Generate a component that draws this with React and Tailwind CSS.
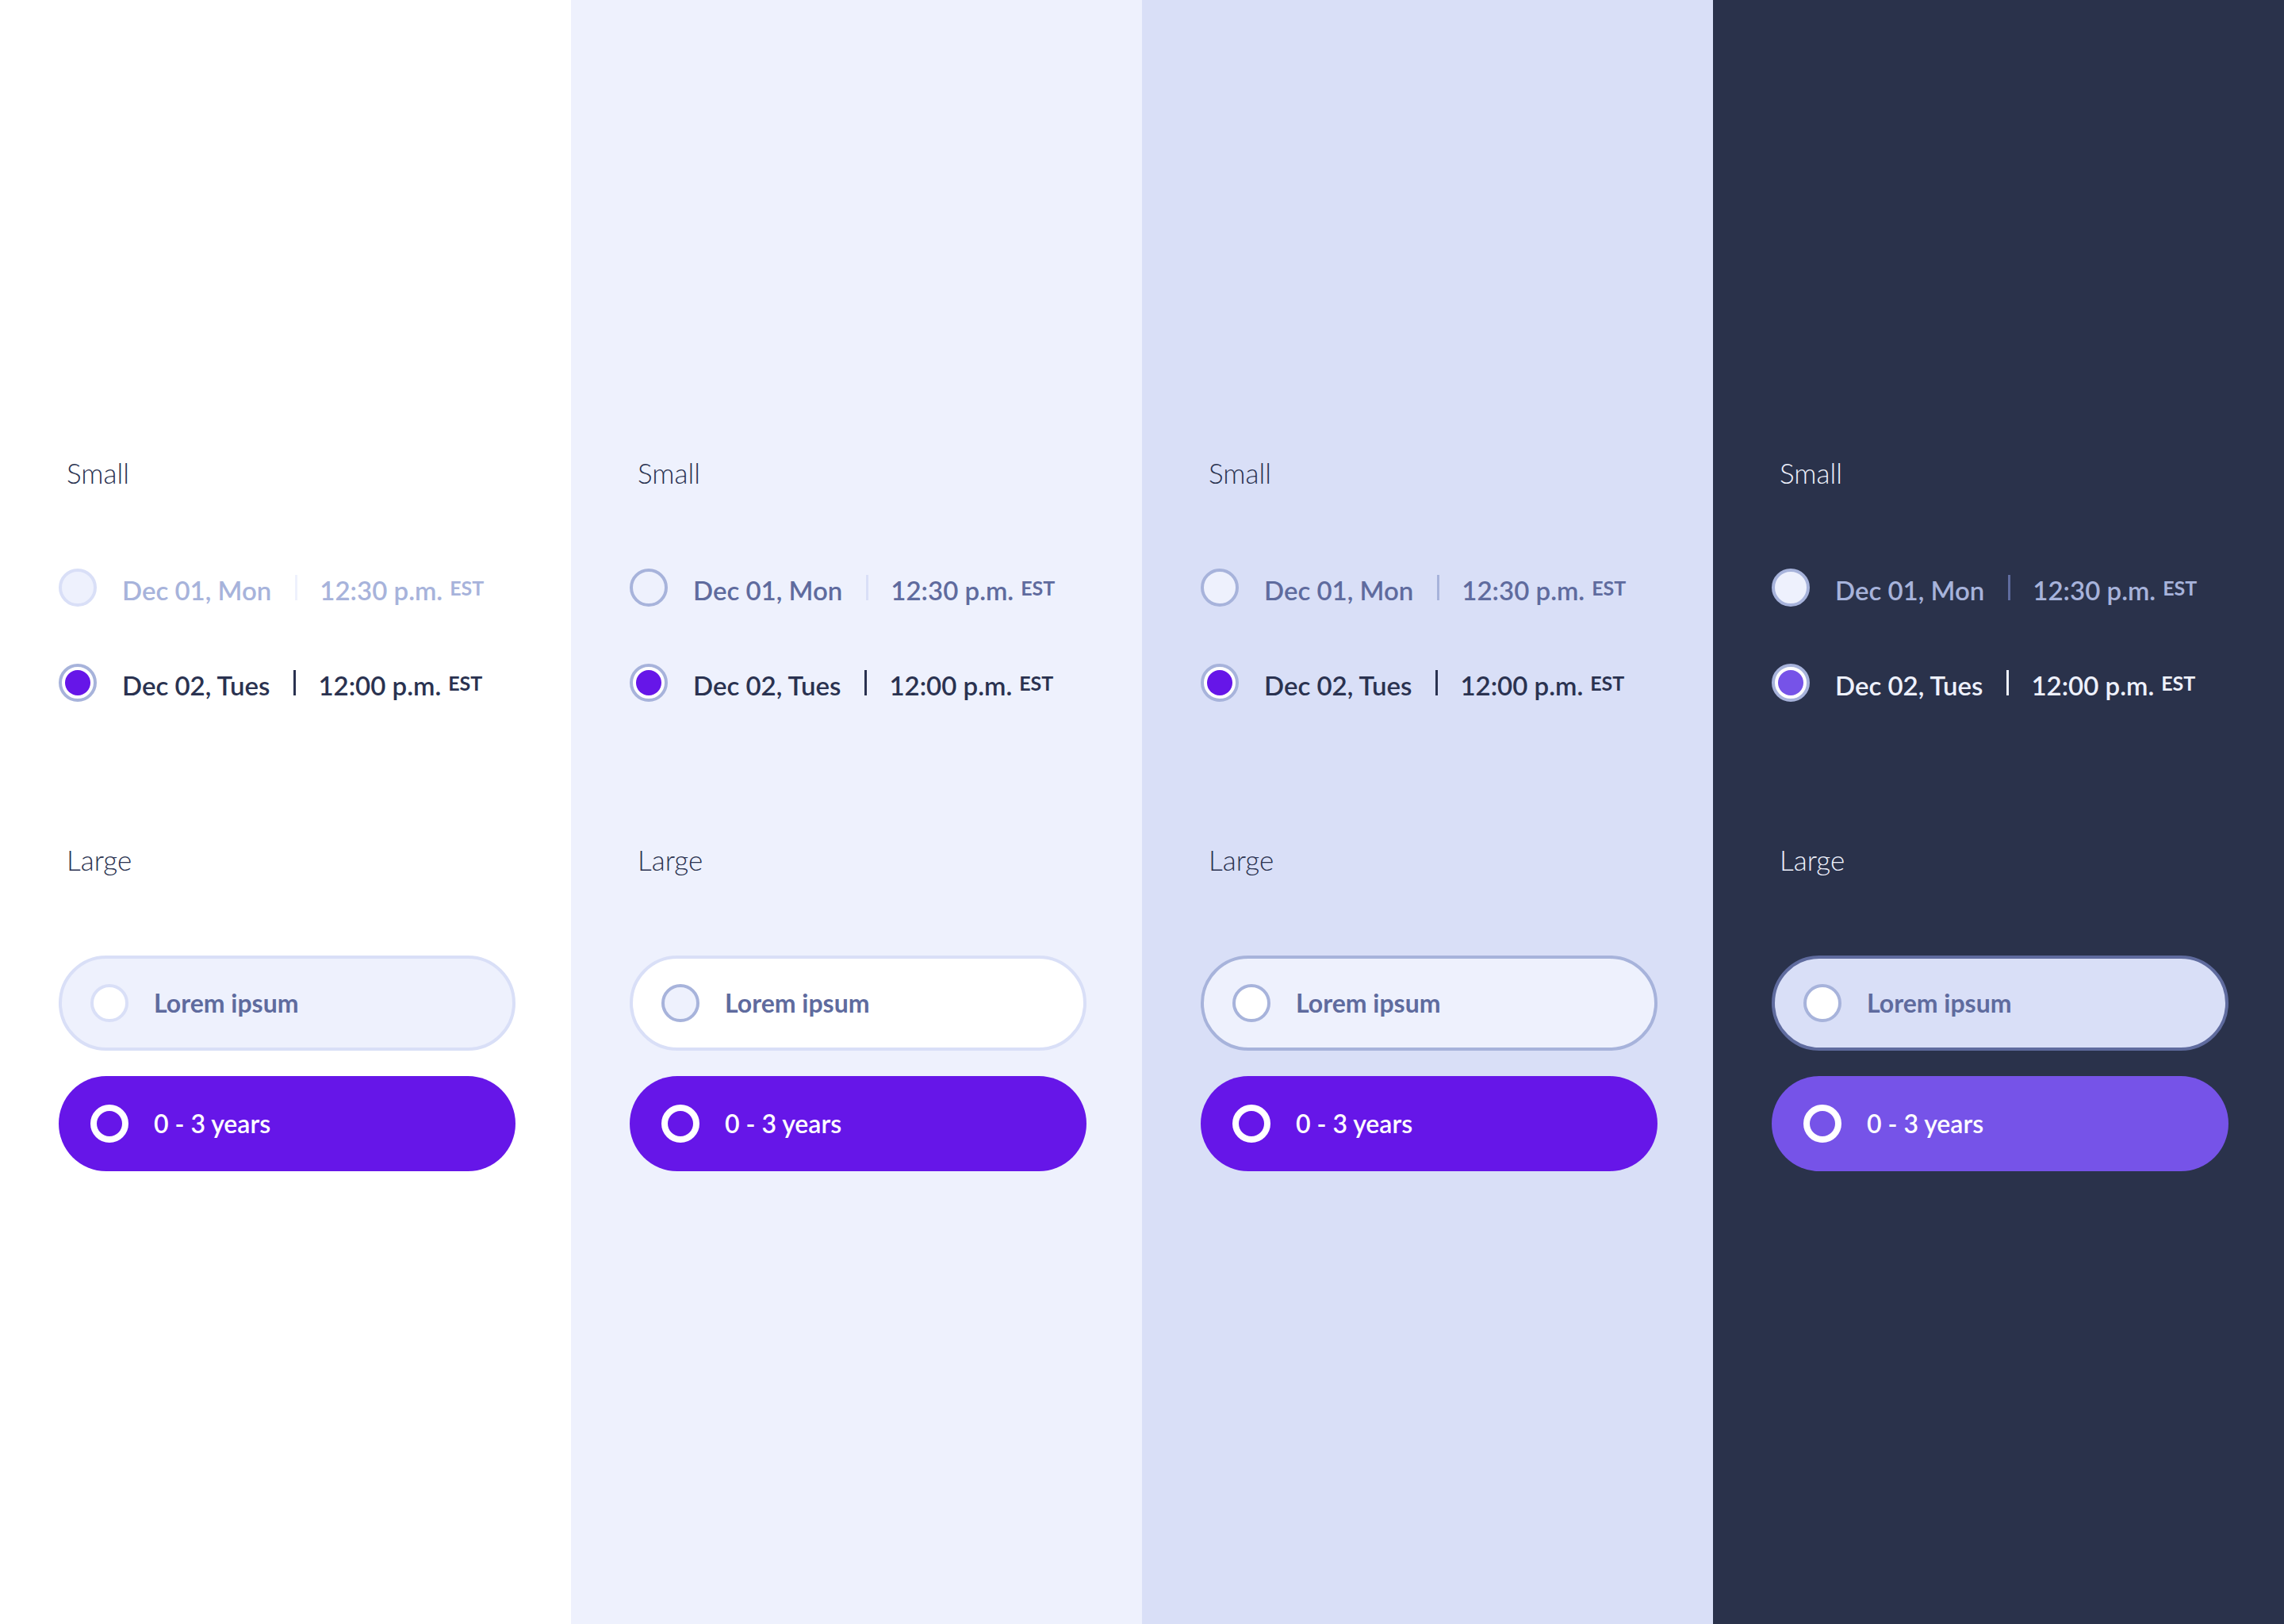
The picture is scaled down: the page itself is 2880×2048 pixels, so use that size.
import React from 'react'

// one theme per column, left to right
const themes = [
    {
        bg: 'bg-white',
        label: 'text-[#2a3250]',
        offDot: 'bg-[#eef1fd] border-[#d9dff7]',
        offText: 'text-[#a7b3db]',
        offSep: 'bg-[#eef1fd]',
        onDot: 'bg-[#6616e8]',
        onText: 'text-[#2a3250]',
        onSep: 'bg-[#2a3250]',
        pill: 'bg-[#eef1fd] border-[#d9dff7]',
        pillDot: 'bg-white border-[#d9dff7]',
        pillOn: 'bg-[#6616e8]',
    },
    {
        bg: 'bg-[#eef1fd]',
        label: 'text-[#2a3250]',
        offDot: 'bg-transparent border-[#a7b3db]',
        offText: 'text-[#5f6b9e]',
        offSep: 'bg-[#d9dff7]',
        onDot: 'bg-[#6616e8]',
        onText: 'text-[#2a3250]',
        onSep: 'bg-[#2a3250]',
        pill: 'bg-white border-[#d9dff7]',
        pillDot: 'bg-[#eef1fd] border-[#a7b3db]',
        pillOn: 'bg-[#6616e8]',
    },
    {
        bg: 'bg-[#d9dff7]',
        label: 'text-[#2a3250]',
        offDot: 'bg-[#eef1fd] border-[#a7b3db]',
        offText: 'text-[#5f6b9e]',
        offSep: 'bg-[#a7b3db]',
        onDot: 'bg-[#6616e8]',
        onText: 'text-[#2a3250]',
        onSep: 'bg-[#2a3250]',
        pill: 'bg-[#eef1fd] border-[#a7b3db]',
        pillDot: 'bg-white border-[#a7b3db]',
        pillOn: 'bg-[#6616e8]',
    },
    {
        bg: 'bg-[#2a324b]',
        label: 'text-[#eef1fd]',
        offDot: 'bg-[#eef1fd] border-[#a7b3db]',
        offText: 'text-[#a7b3db]',
        offSep: 'bg-[#5f6b9e]',
        onDot: 'bg-[#7653e8]',
        onText: 'text-[#eef1fd]',
        onSep: 'bg-[#eef1fd]',
        pill: 'bg-[#d9dff7] border-[#5f6b9e]',
        pillDot: 'bg-white border-[#a7b3db]',
        pillOn: 'bg-[#7653e8]',
    },
]

const SlotRow = ({ t, selected, date, time }) => {
    const text = selected ? t.onText : t.offText
    return (
        <div className="flex items-center h-12">
            {selected ? (
                <span className="w-12 h-12 rounded-full border-4 border-[#a7b3db] bg-white flex items-center justify-center shrink-0">
                    <span className={`w-8 h-8 rounded-full ${t.onDot}`}></span>
                </span>
            ) : (
                <span className={`w-12 h-12 rounded-full border-4 shrink-0 ${t.offDot}`}></span>
            )}
            <span className={`ml-8 mt-[7px] text-[33px] leading-none whitespace-nowrap font-semibold ${text}`}>
                {date}
            </span>
            <span className={`ml-[30px] w-[3px] h-8 ${selected ? t.onSep : t.offSep}`}></span>
            <span className={`ml-[28px] mt-[7px] flex items-start whitespace-nowrap ${text}`}>
                <span className="text-[33px] leading-none font-semibold">{time}</span>
                <span className="ml-[9px] mt-[1px] text-[25px] leading-none font-bold">EST</span>
            </span>
        </div>
    )
}

const Column = ({ t }) => (
    <div className={`${t.bg} h-[2048px] pl-[74px] pt-[579px] flex flex-col`}>
        <p className={`pl-[10px] text-[35px] leading-none font-light ${t.label}`}>Small</p>

        <div className="mt-[103px]">
            <SlotRow t={t} date="Dec 01, Mon" time="12:30 p.m." />
        </div>
        <div className="mt-[72px]">
            <SlotRow t={t} selected date="Dec 02, Tues" time="12:00 p.m." />
        </div>

        <p className={`mt-[182px] pl-[10px] text-[35px] leading-none font-light ${t.label}`}>Large</p>

        {/* large options */}
        <div className={`mt-[103px] w-[576px] h-[120px] rounded-full border-4 pl-9 flex items-center ${t.pill}`}>
            <span className={`w-12 h-12 rounded-full border-4 shrink-0 ${t.pillDot}`}></span>
            <span className="ml-8 text-[32px] leading-none font-bold text-[#5f6b9e]">Lorem ipsum</span>
        </div>
        <div className={`mt-8 w-[576px] h-[120px] rounded-full border-4 border-transparent pl-9 flex items-center ${t.pillOn}`}>
            <span className="w-12 h-12 rounded-full border-[8px] border-white shrink-0"></span>
            <span className="ml-8 text-[32px] leading-none font-semibold text-white">0 - 3 years</span>
        </div>
    </div>
)

const App = () => {
    return (
        <div className="w-[2880px] h-[2048px] grid grid-cols-4 font-['Lato','Noto_Sans',sans-serif] overflow-hidden">
            {themes.map((t, i) => (
                <Column key={i} t={t} />
            ))}
        </div>
    )
}

export default App
